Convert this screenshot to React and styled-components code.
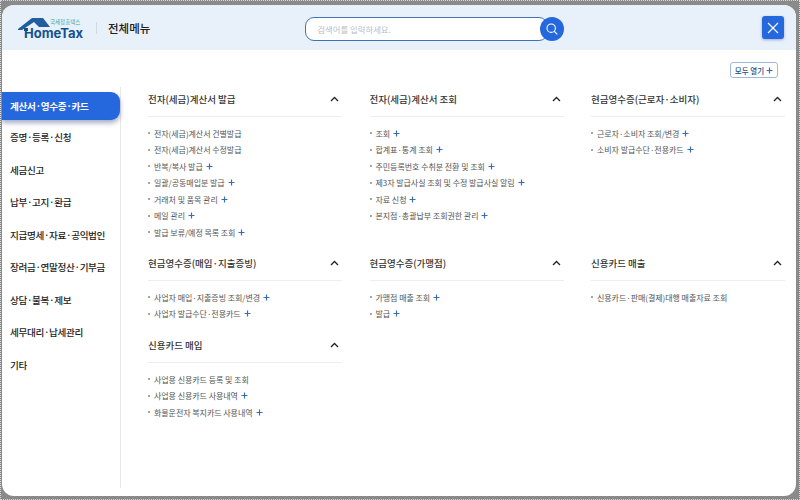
import styled, { createGlobalStyle } from 'styled-components';

const GlobalStyle = createGlobalStyle`
  html, body {
    margin: 0;
    padding: 0;
    width: 800px;
    height: 500px;
    overflow: hidden;
    background: #808080;
    font-family: 'Noto Sans CJK KR', 'Noto Sans', sans-serif;
  }
  * {
    box-sizing: border-box;
  }
`;

const Frame = styled.div`
  width: 800px;
  height: 500px;
  padding: 4px 3px 3px 1px;
  background: #8a8a8a;
  border: 1px dotted #d8d8d8;
`;

const Modal = styled.div`
  width: 100%;
  height: 100%;
  display: flex;
  flex-direction: column;
  background: #fff;
  border-radius: 12px;
  overflow: hidden;
`;

const Header = styled.header`
  flex: none;
  height: 45px;
  display: flex;
  align-items: center;
  padding-left: 16px;
  padding-right: 12px;
  background: #e8f0fa;
`;

const Logo = styled.div`
  position: relative;
  flex: none;
  width: 65px;
  height: 22px;
`;

const LogoHouse = styled.svg`
  position: absolute;
  left: 0;
  top: 0;
`;

const LogoSmall = styled.span`
  position: absolute;
  left: 32px;
  top: 2px;
  font-size: 5.5px;
  line-height: 7px;
  color: #3aa6a0;
  white-space: nowrap;
`;

const LogoText = styled.span`
  position: absolute;
  left: 6px;
  top: 9px;
  font-family: 'Inter', 'Liberation Sans', sans-serif;
  font-size: 13px;
  line-height: 15px;
  font-weight: 700;
  letter-spacing: 0;
  color: #15508f;
`;

const HeaderBar = styled.span`
  flex: none;
  width: 1px;
  height: 12px;
  margin: 0 11px 0 13px;
  background: #cfd8e3;
`;

const PageTitle = styled.h1`
  margin: 0;
  font-size: 11.5px;
  font-weight: 500;
  color: #222;
  white-space: nowrap;
`;

const Search = styled.div`
  position: relative;
  flex: none;
  width: 243px;
  height: 24px;
  margin-left: 155px;
  margin-top: 2px;
  display: flex;
  align-items: center;
  padding-left: 11px;
  background: #fff;
  border: 1px solid #3f74b5;
  border-radius: 9px;
  font-size: 8.4px;
  color: #b9bec5;
`;

const SearchBtn = styled.button`
  position: absolute;
  right: -17px;
  top: -1px;
  width: 24px;
  height: 24px;
  padding: 0;
  display: flex;
  align-items: center;
  justify-content: center;
  border: 0;
  border-radius: 50%;
  background: #2567dc;
`;

const CloseBtn = styled.button`
  width: 22px;
  height: 23px;
  margin-left: auto;
  padding: 0;
  display: flex;
  align-items: center;
  justify-content: center;
  border: 0;
  border-radius: 3px;
  background: #2567dc;
  box-shadow: 0 1px 3px rgba(40, 80, 160, 0.4);
`;

const Body = styled.div`
  flex: 1;
  display: flex;
  min-height: 0;
`;

const Side = styled.nav`
  flex: none;
  width: 119px;
  margin-top: 37px;
  margin-bottom: 8px;
  border-right: 1px solid #e8e8e8;
`;

const SideItem = styled.div`
  height: ${(p) => (p.$active ? '28px' : '32.5px')};
  margin-top: ${(p) => (p.$active ? '5px' : '0')};
  margin-bottom: ${(p) => (p.$active ? '1px' : '0')};
  display: flex;
  align-items: center;
  padding-left: 8px;
  font-size: 9.6px;
  font-weight: ${(p) => (p.$active ? 700 : 500)};
  letter-spacing: -0.35px;
  color: ${(p) => (p.$active ? '#fff' : '#222')};
  background: ${(p) => (p.$active ? '#2567dc' : 'transparent')};
  border-radius: ${(p) => (p.$active ? '0 9px 9px 0' : '0')};
  box-shadow: ${(p) => (p.$active ? '0 3px 5px rgba(30, 50, 100, 0.4)' : 'none')};
  white-space: nowrap;
`;

const Content = styled.main`
  flex: 1;
  padding: 12px 12px 0 27px;
`;

const OpenRow = styled.div`
  height: 16px;
  display: flex;
  justify-content: flex-end;
  padding-right: 7px;
`;

const OpenAll = styled.button`
  width: 48px;
  height: 16px;
  padding: 0;
  display: flex;
  align-items: center;
  justify-content: center;
  gap: 2px;
  background: #fff;
  border: 1px solid #9db8d8;
  border-radius: 3px;
  font-family: inherit;
  font-size: 7.5px;
  font-weight: 500;
  color: #264f80;
`;

const Grid = styled.div`
  display: grid;
  grid-template-columns: repeat(3, 194px);
  grid-template-rows: 164px 82px auto;
  column-gap: 27.5px;
  margin-top: 5px;
`;

const Title = styled.div`
  height: 34px;
  display: flex;
  align-items: center;
  justify-content: space-between;
  padding-right: 3px;
  padding-bottom: 2px;
  border-bottom: 1px solid #eeeeee;
  font-size: 9.5px;
  font-weight: 500;
  color: #333;
  white-space: nowrap;
`;

const List = styled.ul`
  list-style: none;
  margin: 8px 0 0;
  padding: 0;
`;

const Item = styled.li`
  height: 16.5px;
  display: flex;
  align-items: center;
  padding-left: 6px;
  position: relative;
  font-size: 8px;
  letter-spacing: -0.05px;
  color: #555;
  white-space: nowrap;

  &::before {
    content: '';
    position: absolute;
    left: 0;
    top: 7px;
    width: 2px;
    height: 2px;
    border-radius: 50%;
    background: #888;
  }
`;

const Plus = styled.svg`
  margin-left: 3px;
  flex: none;
`;

const PlusIcon = () => (
  <Plus width="7" height="7" viewBox="0 0 7 7">
    <path d="M3.5 .5v6M.5 3.5h6" stroke="#3c6cb0" strokeWidth="1.2" fill="none" />
  </Plus>
);

const sideMenus = [
  '계산서·영수증·카드',
  '증명·등록·신청',
  '세금신고',
  '납부·고지·환급',
  '지급명세·자료·공익법인',
  '장려금·연말정산·기부금',
  '상담·불복·제보',
  '세무대리·납세관리',
  '기타'
];

// [text, has plus]
const sections = [
  {
    title: '전자(세금)계산서 발급',
    items: [
      ['전자(세금)계산서 건별발급', false],
      ['전자(세금)계산서 수정발급', false],
      ['반복/복사 발급', true],
      ['일괄/공동매입분 발급', true],
      ['거래처 및 품목 관리', true],
      ['메일 관리', true],
      ['발급 보류/예정 목록 조회', true]
    ]
  },
  {
    title: '전자(세금)계산서 조회',
    items: [
      ['조회', true],
      ['합계표·통계 조회', true],
      ['주민등록번호 수취분 전환 및 조회', true],
      ['제3자 발급사실 조회 및 수정 발급사실 알림', true],
      ['자료 신청', true],
      ['본지점·총괄납부 조회권한 관리', true]
    ]
  },
  {
    title: '현금영수증(근로자·소비자)',
    items: [
      ['근로자·소비자 조회/변경', true],
      ['소비자 발급수단·전용카드', true]
    ]
  },
  {
    title: '현금영수증(매입·지출증빙)',
    items: [
      ['사업자 매입·지출증빙 조회/변경', true],
      ['사업자 발급수단·전용카드', true]
    ]
  },
  {
    title: '현금영수증(가맹점)',
    items: [
      ['가맹점 매출 조회', true],
      ['발급', true]
    ]
  },
  {
    title: '신용카드 매출',
    items: [['신용카드·판매(결제)대행 매출자료 조회', false]]
  },
  {
    title: '신용카드 매입',
    items: [
      ['사업용 신용카드 등록 및 조회', false],
      ['사업용 신용카드 사용내역', true],
      ['화물운전자 복지카드 사용내역', true]
    ]
  }
];

function App() {
  return (
    <>
      <GlobalStyle />
      <Frame>
        <Modal>
          <Header>
            <Logo>
              <LogoHouse width="34" height="14" viewBox="0 0 34 14">
                <path d="M0 12 14 1h11l7 9H21l-5-5L4 13H0z" fill="#1f5f9f" />
                <path d="M6 11h4v3H6z" fill="#15508f" />
              </LogoHouse>
              <LogoSmall>국세청홈택스</LogoSmall>
              <LogoText>HomeTax</LogoText>
            </Logo>
            <HeaderBar />
            <PageTitle>전체메뉴</PageTitle>
            <Search>
              검색어를 입력하세요.
              <SearchBtn aria-label="검색">
                <svg width="14" height="14" viewBox="0 0 14 14">
                  <circle cx="6.2" cy="6.2" r="4.2" stroke="#fff" strokeWidth="1.1" fill="none" />
                  <path d="M9.3 9.3l3 3" stroke="#fff" strokeWidth="1.2" fill="none" />
                </svg>
              </SearchBtn>
            </Search>
            <CloseBtn aria-label="닫기">
              <svg width="12" height="12" viewBox="0 0 12 12">
                <path d="M1 1l10 10M11 1 1 11" stroke="#fff" strokeWidth="1.1" fill="none" />
              </svg>
            </CloseBtn>
          </Header>
          <Body>
            <Side>
              {sideMenus.map((menu, i) => (
                <SideItem key={menu} $active={i === 0}>
                  {menu}
                </SideItem>
              ))}
            </Side>
            <Content>
              <OpenRow>
                <OpenAll>
                  모두 열기
                  <svg width="7" height="7" viewBox="0 0 7 7">
                    <path d="M3.5 .5v6M.5 3.5h6" stroke="#3c6cb0" strokeWidth="1.2" fill="none" />
                  </svg>
                </OpenAll>
              </OpenRow>
              <Grid>
                {sections.map((section) => (
                  <section key={section.title}>
                    <Title>
                      {section.title}
                      <svg width="9" height="6" viewBox="0 0 9 6">
                        <path d="M1 5l3.5-3.5L8 5" stroke="#222" strokeWidth="1.3" fill="none" />
                      </svg>
                    </Title>
                    <List>
                      {section.items.map(([text, plus]) => (
                        <Item key={text}>
                          {text}
                          {plus && <PlusIcon />}
                        </Item>
                      ))}
                    </List>
                  </section>
                ))}
              </Grid>
            </Content>
          </Body>
        </Modal>
      </Frame>
    </>
  );
}

export default App;
